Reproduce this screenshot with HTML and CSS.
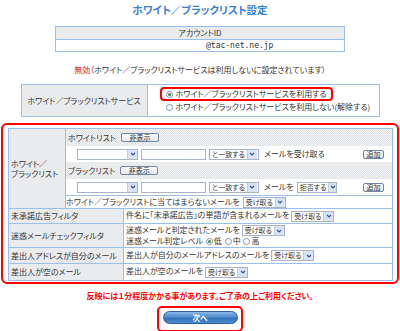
FILE: index.html
```html
<!DOCTYPE html>
<html lang="ja">
<head>
  <meta charset="UTF-8" />
  <title>ホワイト／ブラックリスト設定</title>
  <link rel="stylesheet" href="styles.css">
</head>
<body>
  <h1 class="title">ホワイト／ブラックリスト設定</h1>

  <table class="account">
    <tr><th>アカウントID</th></tr>
    <tr><td class="mail">@tac-net.ne.jp</td></tr>
  </table>

  <p class="status"><span class="off">無効</span>（ホワイト／ブラックリストサービスは利用しないに設定されています）</p>

  <table class="service">
    <tr>
      <th>ホワイト／ブラックリストサービス</th>
      <td>
        <div class="opt hl"><span class="radio on"></span>ホワイト／ブラックリストサービスを利用する</div>
        <div class="opt"><span class="radio"></span>ホワイト／ブラックリストサービスを利用しない(解除する)</div>
      </td>
    </tr>
  </table>

  <div class="redbox">
    <table class="filters">
      <colgroup><col class="c1"><col class="c2"><col></colgroup>
      <tr>
        <th class="grp">ホワイト／<br>ブラックリスト</th>
        <td colspan="2" class="nest">
          <div class="row gray"><span>ホワイトリスト</span><button class="btn">非表示</button></div>
          <div class="row list">
            <span class="sel w1"><span class="val"></span><span class="arr"><svg viewBox="0 0 6 4" width="6" height="4"><path d="M1 1l2 2 2-2" fill="none" stroke="#2a58a8" stroke-width="1.2"/></svg></span></span>
            <span class="inp"></span>
            <span class="sel w2"><span class="val">と一致する</span><span class="arr"><svg viewBox="0 0 6 4" width="6" height="4"><path d="M1 1l2 2 2-2" fill="none" stroke="#2a58a8" stroke-width="1.2"/></svg></span></span>
            <span class="txt">メールを受け取る</span>
            <button class="btn add">追加</button>
          </div>
          <div class="row gray"><span>ブラックリスト</span><button class="btn">非表示</button></div>
          <div class="row list">
            <span class="sel w1"><span class="val"></span><span class="arr"><svg viewBox="0 0 6 4" width="6" height="4"><path d="M1 1l2 2 2-2" fill="none" stroke="#2a58a8" stroke-width="1.2"/></svg></span></span>
            <span class="inp"></span>
            <span class="sel w2"><span class="val">と一致する</span><span class="arr"><svg viewBox="0 0 6 4" width="6" height="4"><path d="M1 1l2 2 2-2" fill="none" stroke="#2a58a8" stroke-width="1.2"/></svg></span></span>
            <span class="txt">メールを</span>
            <span class="sel w3"><span class="val">拒否する</span><span class="arr"><svg viewBox="0 0 6 4" width="6" height="4"><path d="M1 1l2 2 2-2" fill="none" stroke="#2a58a8" stroke-width="1.2"/></svg></span></span>
            <button class="btn add">追加</button>
          </div>
          <div class="row last">
            <span>ホワイト／ブラックリストに当てはまらないメールを</span>
            <span class="sel"><span class="val">受け取る</span><span class="arr"><svg viewBox="0 0 6 4" width="6" height="4"><path d="M1 1l2 2 2-2" fill="none" stroke="#2a58a8" stroke-width="1.2"/></svg></span></span>
          </div>
        </td>
      </tr>
      <tr class="r1">
        <th colspan="2">未承諾広告フィルタ</th>
        <td>件名に「未承諾広告」の単語が含まれるメールを
          <span class="sel"><span class="val">受け取る</span><span class="arr"><svg viewBox="0 0 6 4" width="6" height="4"><path d="M1 1l2 2 2-2" fill="none" stroke="#2a58a8" stroke-width="1.2"/></svg></span></span></td>
      </tr>
      <tr class="r2">
        <th colspan="2">迷惑メールチェックフィルタ</th>
        <td>
          <div>迷惑メールと判定されたメールを
            <span class="sel"><span class="val">受け取る</span><span class="arr"><svg viewBox="0 0 6 4" width="6" height="4"><path d="M1 1l2 2 2-2" fill="none" stroke="#2a58a8" stroke-width="1.2"/></svg></span></span></div>
          <div class="level">迷惑メール判定レベル
            <span class="radio on"></span>低
            <span class="radio"></span>中
            <span class="radio"></span>高</div>
        </td>
      </tr>
      <tr class="r3">
        <th colspan="2">差出人アドレスが自分のメール</th>
        <td>差出人が自分のメールアドレスのメールを
          <span class="sel"><span class="val">受け取る</span><span class="arr"><svg viewBox="0 0 6 4" width="6" height="4"><path d="M1 1l2 2 2-2" fill="none" stroke="#2a58a8" stroke-width="1.2"/></svg></span></span></td>
      </tr>
      <tr class="r4">
        <th colspan="2">差出人が空のメール</th>
        <td>差出人が空のメールを
          <span class="sel"><span class="val">受け取る</span><span class="arr"><svg viewBox="0 0 6 4" width="6" height="4"><path d="M1 1l2 2 2-2" fill="none" stroke="#2a58a8" stroke-width="1.2"/></svg></span></span></td>
      </tr>
    </table>
  </div>

  <p class="notice">反映には１分程度かかる事があります。ご了承の上ご利用ください。</p>

  <div class="next-wrap">
    <button class="next">次へ</button>
  </div>
</body>
</html>
```

FILE: styles.css
```css
body {
  margin: 0;
  width: 400px;
  font-family: "Noto Sans CJK JP", "Noto Sans", sans-serif;
  font-feature-settings: "palt";
  font-size: 8px;
  line-height: 10px;
  color: #333;
  background: #fff;
}
table {
  border-collapse: collapse;
}
th {
  font-weight: normal;
}
.account th, .service th, .filters th, .row.gray {
  background: repeating-conic-gradient(#e2e4e6 0 25%, #f1f2f3 0 50%) 0 0 / 2px 2px;
}

.title {
  margin: 4px 0 0;
  text-align: center;
  font-size: 10.5px;
  line-height: 12px;
  color: #3a80d2;
}

.account {
  width: 290px;
  margin: 10px auto 0;
  border: 1px solid #9cc0ec;
}
.account th {
  height: 12px;
  padding: 0;
  border-bottom: 1px solid #9cc0ec;
}
.account td {
  height: 11px;
  padding: 0 0 0 150px;
  font-family: "DejaVu Sans Mono", monospace;
  font-size: 8px;
}

.status {
  margin: 13px 0 0;
  text-align: center;
}
.off {
  color: #e01010;
}

.service {
  width: 359px;
  margin: 9px auto 0;
  border: 1px solid #9cc0ec;
}
.service th {
  width: 125px;
  height: 31px;
  padding: 0;
  border-right: 1px solid #9cc0ec;
}
.service td {
  padding: 2px 0 0 12px;
  vertical-align: top;
}
.opt {
  display: flex;
  align-items: center;
  height: 10px;
  padding-left: 6px;
  white-space: nowrap;
}
.opt.hl {
  width: fit-content;
  padding: 0 4px;
  border: 2px solid #f00;
  border-radius: 4px;
  margin-bottom: 1px;
}
.radio {
  display: inline-block;
  width: 5px;
  height: 5px;
  margin-right: 3px;
  border: 1px solid #7c95b8;
  border-radius: 50%;
  background: #fff;
  vertical-align: -1px;
  position: relative;
}
.radio.on::after {
  content: "";
  position: absolute;
  left: 1px;
  top: 1px;
  width: 3px;
  height: 3px;
  border-radius: 50%;
  background: #3d8a3d;
}

.redbox {
  width: 387px;
  margin: 6px 0 0 1px;
  padding: 3px 2px 1px 5px;
  border: 2px solid #f00;
  border-radius: 6px;
}
.filters {
  width: 385px;
  table-layout: fixed;
  border: 1px solid #9cc0ec;
}
.filters .c1 { width: 57px; }
.filters .c2 { width: 58px; }
.filters th {
  text-align: left;
  padding: 0 0 0 2px;
  border: 1px solid #9cc0ec;
}
.filters td {
  padding: 0 0 0 2px;
  border: 1px solid #9cc0ec;
  background: #fff;
}
.filters td.nest {
  padding: 0;
}
.row {
  display: flex;
  align-items: center;
  gap: 3px;
  height: 17px;
  padding: 0 8px 0 2px;
}
.row.list {
  padding-left: 11px;
  height: 16px;
}
.row.last {
  height: 12px;
  padding-left: 0;
  border-top: 1px solid #9cc0ec;
}
.row .txt {
  margin-left: 2px;
}
.btn {
  height: 9px;
  padding: 0 5px;
  margin-left: 2px;
  font: inherit;
  font-size: 7px;
  line-height: 7px;
  color: #333;
  border: 1px solid #6f86a8;
  border-radius: 2px;
  background: linear-gradient(#ffffff, #e4e6ea);
}
.btn:not(.add) {
  width: 38px;
}
.btn.add {
  width: 21px;
  padding: 0;
  margin-left: auto;
}

.sel {
  display: inline-flex;
  align-items: stretch;
  height: 9px;
  border: 1px solid #a8b4c8;
  background: #fff;
  vertical-align: middle;
  font-size: 7px;
  line-height: 9px;
}
.sel .val {
  padding: 0 2px;
  white-space: nowrap;
}
.sel .arr {
  display: flex;
  align-items: center;
  justify-content: center;
  width: 9px;
  background: #d9e3f5;
  border-left: 1px solid #c0cce0;
}
.sel.w1 { width: 59px; }
.sel.w1 .val { flex: 1; }
.sel.w2 { width: 48px; }
.sel.w3 { width: 38px; }
.inp {
  width: 63px;
  height: 9px;
  border: 1px solid #a8b4c8;
  background: #fff;
}

.r1 th, .r1 td { height: 14px; }
.r2 th, .r2 td { height: 23px; }
.r3 th, .r3 td { height: 15px; }
.r4 th, .r4 td { height: 16px; }
.level .radio {
  margin-left: 1px;
  margin-right: 1px;
}

.notice {
  margin: 7px 0 0;
  text-align: center;
  color: #f00;
  font-weight: bold;
}

.next-wrap {
  width: 82px;
  height: 19px;
  margin: 5px 0 0 157px;
  padding-top: 3px;
  border: 2px solid #f00;
  border-radius: 5px;
  display: flex;
  justify-content: center;
  align-items: flex-start;
}
.next {
  width: 75px;
  height: 13px;
  padding: 0;
  border: 1px solid #2d5f9c;
  border-radius: 7px;
  background: linear-gradient(#8ab8e8, #4a86c8 50%, #2e6cb2 51%, #4b8ed4);
  color: #fff;
  font: inherit;
  font-weight: bold;
  font-size: 7.5px;
  line-height: 11px;
}
```
